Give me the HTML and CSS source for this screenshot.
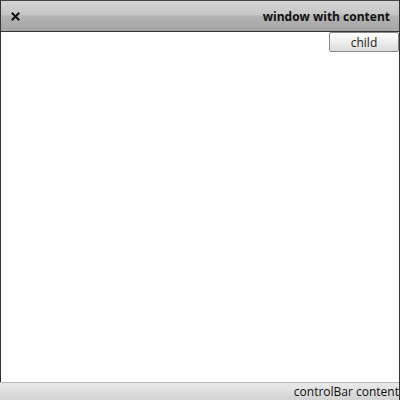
FILE: index.html
```html
<!DOCTYPE html>
<html>
<head>
<meta charset="utf-8">
<link rel="stylesheet" href="styles.css">
</head>
<body>
<div class="window">
  <div class="titlebar">
    <span class="close">
      <svg width="9" height="9" viewBox="0 0 9 9"><path d="M1.5 1.5L7.5 7.5M7.5 1.5L1.5 7.5" stroke="#111" stroke-width="2" stroke-linecap="square"/></svg>
    </span>
    <span class="title">window with content</span>
  </div>
  <div class="content">
    <button class="child">child</button>
  </div>
  <div class="controlbar"><span class="cb-text">controlBar content</span></div>
</div>
</body>
</html>
```
FILE: styles.css
```css
html, body {
  margin: 0;
  padding: 0;
  background: #fff;
}
.window {
  width: 400px;
  height: 400px;
  box-sizing: border-box;
  display: flex;
  flex-direction: column;
  border-right: 1px solid #333;
  font-family: "Open Sans", "DejaVu Sans", sans-serif;
  overflow: hidden;
}
.titlebar {
  height: 30px;
  flex: none;
  display: flex;
  align-items: center;
  justify-content: space-between;
  border-top: 1px solid #444;
  border-left: 1px solid #333;
  border-bottom: 1px solid #333;
  background: linear-gradient(#d4d4d4 0%, #c6c6c6 45%, #b4b4b4 50%, #a4a4a4 100%);
  padding: 0 9px 0 10px;
}
.close {
  display: flex;
  width: 9px;
  height: 9px;
}
.title {
  font-weight: bold;
  font-size: 12px;
  color: #111;
}
.content {
  flex: 1;
  border-left: 1px solid #333;
  display: flex;
  justify-content: flex-end;
  align-items: flex-start;
}
.child {
  width: 70px;
  height: 20px;
  margin: 0;
  padding: 0;
  border: 1px solid #888;
  border-radius: 2px;
  background: linear-gradient(#ffffff, #dcdcdc);
  font-family: "Open Sans", "DejaVu Sans", sans-serif;
  font-size: 12px;
  color: #222;
}
.controlbar {
  height: 17px;
  flex: none;
  border-top: 1px solid #bbb;
  background: linear-gradient(#eaeaea, #d2d2d2);
  display: flex;
  justify-content: flex-end;
  align-items: center;
  overflow: hidden;
  white-space: nowrap;
}
.cb-text {
  font-size: 12px;
  color: #111;
  margin-right: 0;
}
```
